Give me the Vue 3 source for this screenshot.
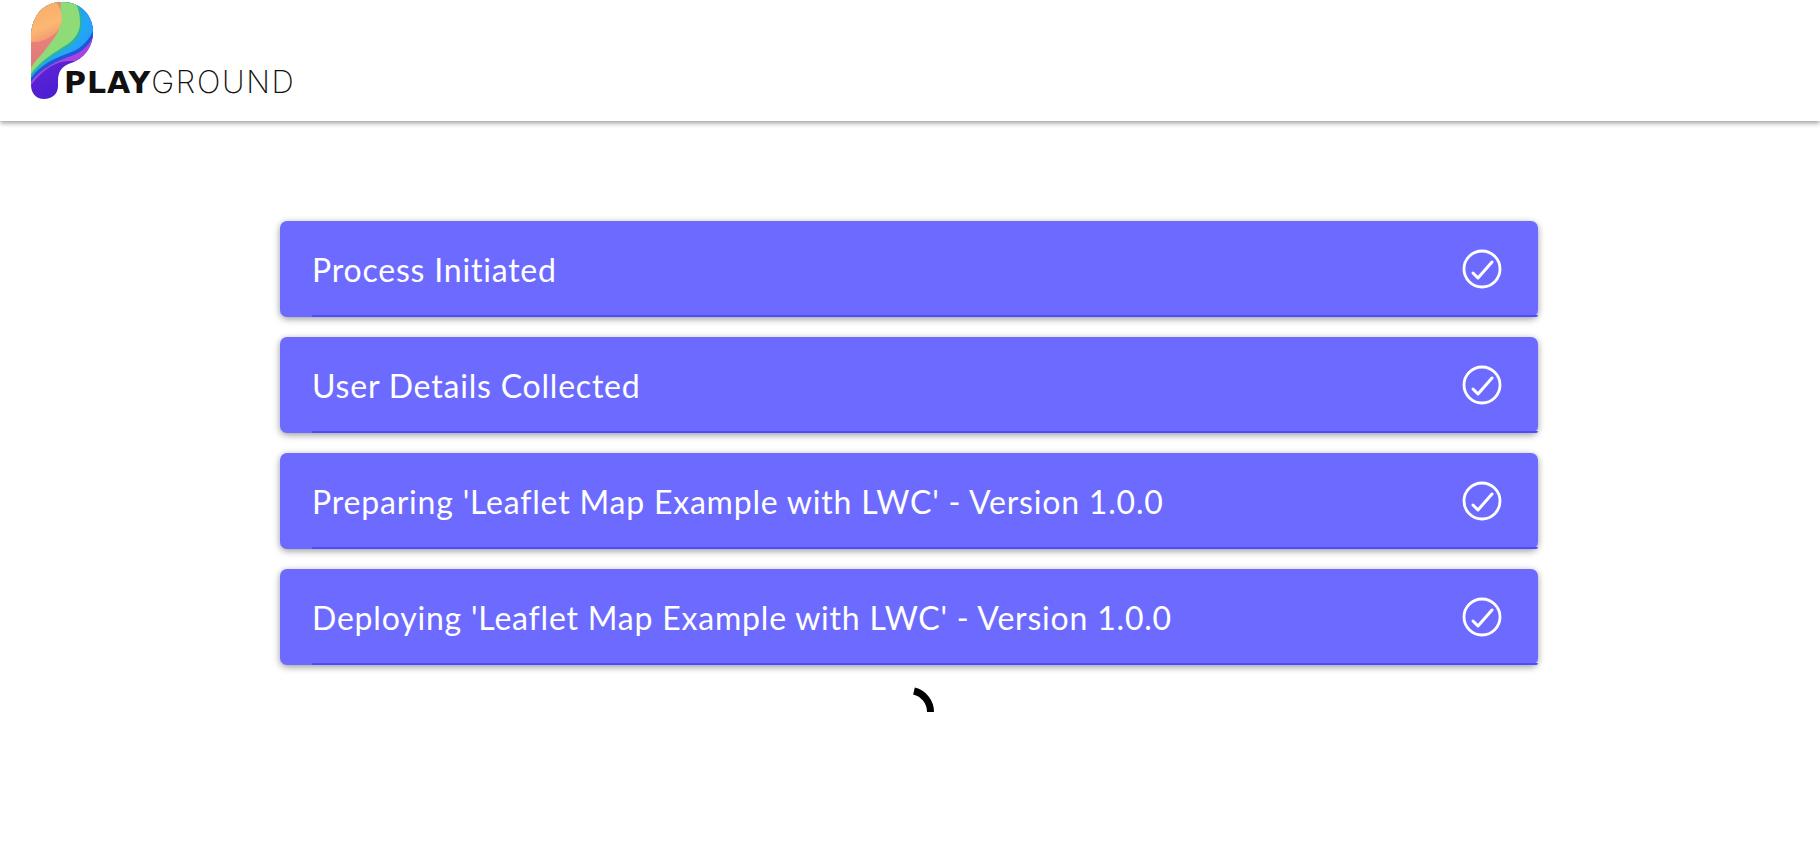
<template>
  <div class="page">
    <header class="entete">
      <div class="logo">
        <svg class="logo-p" width="64" height="100" viewBox="0 0 64 100">
          <defs>
            <clipPath id="forme-p">
              <path d="M0 38 C0 14 13 1 31 1 C50 1 62 14 62 31 C62 47 52 58 40 62 C31 65 27 70 27 80 L27 85 C27 93 21 98 13 98 C5 98 0 92 0 84 Z" />
            </clipPath>
            <linearGradient id="degrade-bas" x1="0" y1="0" x2="0.4" y2="1">
              <stop offset="0" stop-color="#7a2fe0" />
              <stop offset="1" stop-color="#4a1cd0" />
            </linearGradient>
            <linearGradient id="degrade-orange" x1="0" y1="0" x2="0.3" y2="1">
              <stop offset="0" stop-color="#fca86a" />
              <stop offset="0.7" stop-color="#fbb872" />
              <stop offset="1" stop-color="#f59a70" />
            </linearGradient>
            <linearGradient id="degrade-rose" x1="0" y1="0" x2="0" y2="1">
              <stop offset="0" stop-color="#f28a74" />
              <stop offset="1" stop-color="#e0787e" />
            </linearGradient>
            <linearGradient id="degrade-bleu" x1="0" y1="0" x2="1" y2="1">
              <stop offset="0" stop-color="#20a0d0" />
              <stop offset="0.6" stop-color="#22a6f8" />
              <stop offset="1" stop-color="#2a8cf0" />
            </linearGradient>
          </defs>
          <g clip-path="url(#forme-p)">
            <rect width="64" height="100" fill="url(#degrade-bas)" />
            <path d="M64 28 V60 H38 C26 60 12 68 0 84 V70 C14 56 30 52 44 48 C54 44 60 38 64 28 Z" fill="#a844e4" />
            <path d="M0 81 C10 67 26 60 40 55 C50 51 58 46 64 32 V20 H0 Z" fill="#1f55d6" />
            <path d="M0 77 C10 63 26 56 38 52 C50 48 58 40 64 26 V0 H0 Z" fill="url(#degrade-bleu)" />
            <path d="M0 76 C8 63 24 54 38 46 C47 40 51 32 51 23 C51 12 49 5 45 0 H0 Z" fill="#2ab4a8" />
            <path d="M0 73 C8 61 24 51 37 43 C45 37 49 30 49 22 C49 12 47 5 43 0 H0 Z" fill="#8edb78" />
            <path d="M0 67 C4 59 10 55 14 49 C19 42 25 36 28 28 L30 0 H0 Z" fill="url(#degrade-rose)" />
            <path d="M24 0 C30 6 32 16 30 23 C27 33 14 42 0 41 V0 Z" fill="url(#degrade-orange)" />
          </g>
        </svg>
        <span class="logo-texte"><b>PLAY</b>GROUND</span>
      </div>
    </header>

    <main class="contenu">
      <div v-for="etape in etapes" :key="etape" class="carte">
        <span>{{ etape }}</span>
        <svg width="40" height="40" viewBox="0 0 40 40" fill="none" stroke="#fff" stroke-width="2.8">
          <circle cx="20" cy="20" r="18" />
          <path d="M11 24 L16 29 L30 13" stroke-linecap="round" stroke-linejoin="round" stroke-width="3" />
        </svg>
      </div>
      <div class="chargement">
        <svg class="spinner" width="26" height="28" viewBox="0 0 26 28" fill="none" stroke="#000" stroke-width="7">
          <path d="M4 5 A21.5 21.5 0 0 1 20.5 26" />
        </svg>
      </div>
    </main>
  </div>
</template>

<script setup>
const etapes = [
  'Process Initiated',
  'User Details Collected',
  "Preparing 'Leaflet Map Example with LWC' - Version 1.0.0",
  "Deploying 'Leaflet Map Example with LWC' - Version 1.0.0",
]
</script>

<style>
html,
body {
  margin: 0;
  background: #fff;
}
</style>

<style scoped>
.page {
  font-family: "Lato", "Open Sans", sans-serif;
}

.entete {
  height: 121px;
  box-sizing: border-box;
  padding-left: 31px;
  background: #fff;
  box-shadow: 0 2px 5px rgba(0, 0, 0, 0.4);
}

.logo {
  position: relative;
  width: 270px;
  height: 100px;
  padding-top: 1px;
}

.logo-p {
  display: block;
}

.logo-texte {
  position: absolute;
  left: 33px;
  top: 65px;
  font-family: "Inter", sans-serif;
  font-size: 31px;
  line-height: 34px;
  font-weight: 200;
  color: #111;
  letter-spacing: 1.7px;
}

.logo-texte b {
  font-family: "DejaVu Sans", sans-serif;
  font-size: 30px;
  font-weight: 700;
  letter-spacing: 1px;
}

.contenu {
  padding: 100px 282px 0 280px;
  display: flex;
  flex-direction: column;
  gap: 20px;
}

.carte {
  height: 96px;
  box-sizing: border-box;
  padding: 0 36px 0 32px;
  display: flex;
  align-items: center;
  justify-content: space-between;
  position: relative;
  background: #6d6bff;
  border-radius: 7px;
  color: #fff;
  font-size: 32px;
  letter-spacing: 0.8px;
  box-shadow: 0 2px 7px rgba(0, 0, 0, 0.4);
}

.carte::after {
  content: "";
  position: absolute;
  left: 32px;
  right: 0;
  bottom: 0;
  height: 2px;
  background: #4f4cff;
  border-bottom-right-radius: 7px;
}

.chargement {
  height: 60px;
  margin-top: -20px;
  position: relative;
}

.spinner {
  position: absolute;
  left: 630px;
  top: 21px;
}
</style>
